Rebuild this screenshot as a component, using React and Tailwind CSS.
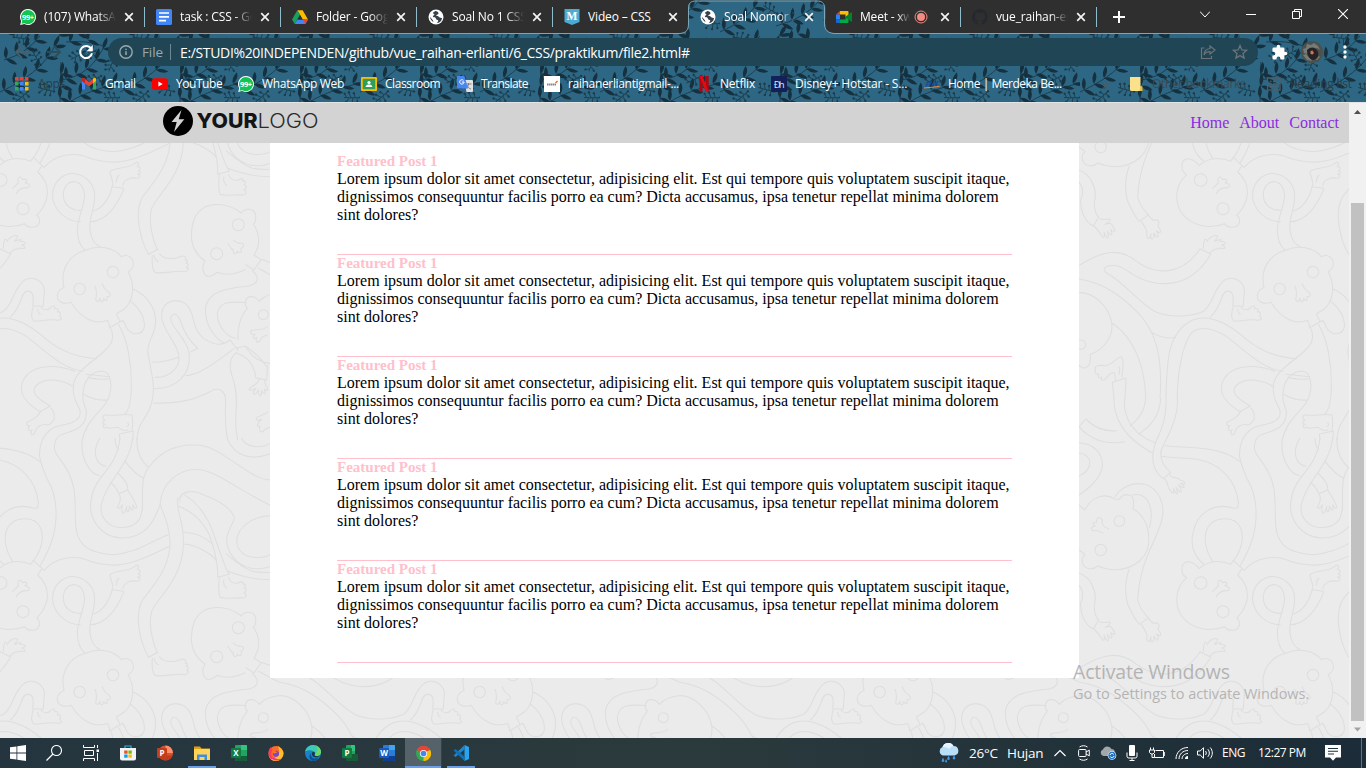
import React from "react";

const CHROME_FONT = "font-['Open_Sans','Noto_Sans',sans-serif]";

/* ---------- Doodle wallpaper ---------- */

const doodleA =
  "M510,9 C505,70 475,110 440,155 C415,180 412,220 417,255 C422,290 435,325 446,343 L475,327 M472,331 C455,290 445,240 455,205 C475,160 545,110 550,9 M457,345 C455,370 458,390 465,398 C490,402 530,390 555,395 C568,392 566,385 560,382 C568,378 565,370 558,370 C566,365 562,358 555,360 C562,350 550,345 540,350 C520,358 490,360 478,340 M463,345 C462,355 470,362 476,365 " +
  "M370,145 L336,140 C345,130 330,110 330,95 C345,80 380,88 405,70 C415,62 420,72 412,80 C425,80 422,90 414,92 C425,95 420,103 412,102 C425,105 420,115 410,115 C390,110 370,120 368,140 M358,105 C345,110 355,120 347,128 " +
  "M336,142 C330,170 310,205 280,213 M372,145 C355,190 320,245 272,245 M242,245 C190,245 155,200 158,160 C162,120 195,97 225,101 C265,107 285,140 284,170 C283,210 265,240 270,270 C273,295 285,315 302,321 M245,211 C215,213 190,195 190,165 C190,140 205,124 225,125 C245,128 256,150 253,175 C248,210 232,240 232,270 C233,300 240,320 256,331 " +
  "M349,523 L360,544 M330,562 L323,541 C290,555 245,540 213,487 C190,495 170,485 172,465 C175,450 182,445 192,443 C180,390 205,345 256,331 C300,312 345,325 364,350 C385,340 402,355 400,375 C398,385 390,392 384,395 C405,430 402,480 375,505 C365,515 355,515 349,523 " +
  "M284,438 C292,450 290,465 287,480 C292,488 298,482 300,475 C300,490 310,488 312,475 C315,488 325,482 320,470 C335,472 332,460 325,455 C315,450 310,440 306,430 M327,565 L368,541 L376,553 " +
  "M400,447 C440,465 475,510 465,560 C460,590 440,610 444,640 C450,680 462,720 460,750 C458,790 450,810 430,840 C415,860 412,880 411,900 M388,481 C415,500 435,530 433,560 C430,585 400,585 390,575 C380,570 378,560 372,546 M355,553 C385,600 395,680 394,740 C393,790 385,815 373,822 M333,565 C345,600 335,615 300,645 C255,680 220,705 220,740 C215,790 250,800 238,830 C220,860 170,850 150,870 C135,885 130,890 127,900 M168,900 C180,870 235,885 255,840 C270,800 240,800 250,750 C255,715 280,690 310,694 C335,700 335,740 330,760 C320,810 260,830 247,900 M257,703 L328,710 M262,712 C280,718 310,718 328,716 " +
  "M220,740 C190,720 140,710 110,735 C90,755 110,775 151,798 L120,815 C80,790 50,760 70,720 C95,675 160,670 225,694 M122,812 C120,825 100,840 85,845 C75,850 82,860 90,857 C80,868 88,876 96,870 C90,882 96,890 104,880 C108,860 125,850 145,855 C165,845 170,825 152,803 M250,762 C270,775 295,782 322,780 " +
  "M396,872 C398,860 398,840 396,825 C370,820 340,830 315,824 C305,828 308,838 315,840 C305,845 308,852 315,853 C305,856 310,866 320,862 C330,870 345,860 355,862 C360,870 375,872 385,870 M382,848 C388,852 386,857 380,860 M358,882 L400,873 L398,900 M358,882 L360,900 " +
  "M724,219 C680,185 610,180 583,235 C565,290 575,335 615,363 C600,390 615,412 630,409 C640,407 645,403 650,397 C690,410 715,398 736,389 M724,219 C735,203 762,203 767,225 C768,240 765,250 760,252 C785,290 778,320 762,345 L782,358 M683,310 C695,320 690,330 700,328 C697,340 708,348 712,333 C720,345 728,335 722,325 C735,322 732,308 722,310 C710,312 700,300 699,300 M736,373 L762,390 L784,358 L837,377 M775,385 C795,395 815,408 837,417 M756,392 C780,410 775,430 750,437 C700,445 630,445 617,500 C612,550 640,590 672,610 M740,488 C700,485 660,480 652,520 C652,560 680,590 707,595 " +
  "M837,458 C810,460 790,470 778,484 C765,465 740,465 736,485 C733,495 738,500 742,505 C720,530 710,570 715,600 M735,618 C755,650 780,672 832,672 M803,558 C790,575 765,565 752,573 C750,582 758,585 765,583 C755,592 762,600 770,592 C765,605 772,612 780,602 C783,592 790,588 803,585 " +
  "M463,712 C510,715 545,680 535,640 C525,600 480,560 485,520 C490,480 530,475 555,490 C590,520 570,560 610,595 C650,620 670,615 690,600 M460,745 C530,750 575,700 567,640 C565,600 510,560 512,535 C515,520 530,515 540,540 C550,570 570,605 593,625 L570,637 M535,652 C510,662 480,667 455,667 M556,707 C600,705 650,665 703,625 M460,790 C540,790 580,780 630,755 C655,740 675,750 677,780 C675,820 675,860 683,900 M690,600 L715,632 M707,625 L736,618 M710,640 C745,650 765,680 767,713 L800,720 L803,676 M735,618 C755,630 785,655 800,680 M712,635 C680,660 690,690 700,720 C720,780 700,830 710,880 L713,900 " +
  "M778,716 C775,735 755,735 747,748 C752,755 762,748 768,745 C755,758 760,768 768,760 C772,755 775,752 776,750 C775,770 785,775 785,752 C790,765 798,765 793,748 C805,755 806,748 797,735 L793,720 M805,815 C790,828 775,825 768,835 C770,845 780,840 785,838 C770,850 768,862 780,858 C775,875 785,882 795,868 L810,862";

const doodleB =
  "M553,170 C600,200 630,250 645,300 C660,340 670,380 688,410 M535,205 C580,220 620,260 635,310 C650,360 655,390 653,418 L690,408 M658,418 C655,445 655,465 660,478 C680,484 715,478 730,480 C742,476 740,468 732,465 C742,460 740,450 732,450 C740,442 735,436 728,438 C732,430 722,430 715,435 C700,438 690,430 685,418 M672,425 C667,440 675,445 680,452 " +
  "M837,235 C760,225 710,270 710,310 C712,355 760,365 800,355 C815,350 825,345 837,335 M540,190 C535,165 570,150 610,170 C650,185 695,210 703,240 C700,260 680,275 680,310 C685,360 730,397 780,392 C800,390 815,385 837,375 M548,283 C590,285 610,295 640,320 M550,318 C590,320 640,350 650,370 M678,347 C700,365 720,385 757,400 C785,405 810,402 837,406 M685,400 C720,415 760,425 812,425 L837,442 " +
  "M410,0 C412,50 425,70 445,88 M427,220 C430,180 420,120 445,90 C480,40 530,15 600,22 C670,32 740,115 800,125 L837,125 M425,215 C425,250 400,270 360,269 C310,265 295,220 307,190 C320,130 390,80 398,0 M480,200 C460,260 430,300 365,300 C300,298 265,240 273,190 C280,110 350,100 360,0 M480,200 C485,130 540,90 600,95 C650,100 720,160 837,215 M480,200 C500,245 512,290 510,324 M534,178 C525,220 555,250 550,324 " +
  "M127,6 C110,50 120,70 140,120 C165,160 170,200 168,240 C165,300 145,340 120,385 M168,6 C155,35 170,50 185,70 C230,130 225,180 226,240 C225,310 250,345 340,350 C410,345 440,315 505,290 M132,397 C170,355 230,350 270,370 C350,395 400,380 508,325 " +
  "M247,6 C240,60 270,110 300,113 M300,0 C275,40 285,80 320,85 M345,0 C345,20 350,30 357,35 M375,70 C390,90 410,110 430,120 M353,105 C370,120 385,140 383,155 L357,167 C350,150 340,140 332,133 M357,167 C365,180 360,195 352,208 C358,215 365,205 368,200 C362,215 368,230 372,225 C378,215 380,210 380,205 C378,225 388,228 388,205 C395,220 402,222 398,200 C405,215 415,212 408,200 C400,180 390,170 383,155 M683,6 C700,40 740,85 837,35 M725,0 C735,30 790,35 820,10";

const doodleC =
  "M482,190 C450,175 410,180 388,203 C370,180 345,175 337,195 C333,215 340,225 350,230 C315,260 312,310 335,345 C365,385 420,395 463,377 C475,392 500,392 508,375 C512,360 505,355 500,352 C540,310 545,260 503,222 L515,204 M482,190 L490,178 L523,209 M427,272 L445,255 C440,235 455,232 457,245 C470,240 475,250 465,254 C480,255 482,270 470,269 C455,268 445,275 438,288 " +
  "M27,503 C100,455 150,450 200,490 C260,535 340,530 390,452 L422,468 C370,560 290,570 220,545 C180,530 170,510 140,503 C105,500 90,515 115,528 C170,560 220,630 265,645 C310,660 370,655 400,640 C430,620 430,570 465,545 C500,530 530,560 522,590 L520,625 L488,623 L490,600 C487,575 465,570 455,600 C445,630 435,645 420,658 M400,452 C400,430 405,415 412,430 C420,415 440,408 443,415 C445,420 430,430 435,430 C455,420 455,425 450,430 C470,430 470,440 455,440 C470,448 468,455 450,450 C440,455 430,450 420,465 M490,625 C482,650 485,665 492,670 C520,668 545,662 565,667 C578,665 576,658 568,655 C575,645 570,640 562,642 C568,632 560,630 553,632 C558,622 548,622 542,628 C535,638 520,638 513,627 M503,633 C502,645 508,645 512,650 " +
  "M288,900 C290,800 290,700 370,665 C430,645 490,690 530,725 C580,765 630,780 682,782 M322,900 C322,830 335,750 360,710 C385,680 440,685 500,740 C550,780 590,815 640,820 M27,543 C100,555 150,590 200,640 C250,690 280,760 270,900 M245,703 C270,720 300,722 318,718 M27,584 C70,582 120,625 126,680 C128,720 100,755 60,770 C65,795 55,810 40,810 C32,808 27,803 22,798 M127,675 C190,720 225,800 227,900 M168,840 L127,853 L132,900 M168,842 L165,900 M155,838 C160,810 160,785 155,777 C140,775 130,800 105,803 C85,800 70,805 77,815 C72,825 80,830 86,828 C82,840 90,842 95,838 C92,850 102,848 108,842 C115,832 125,820 133,825 C137,838 135,845 137,850 M145,805 C155,812 145,820 148,830";

const doodleD =
  "M402,523 C370,500 360,460 370,425 C380,370 430,340 480,352 C500,358 506,355 505,340 C500,270 450,220 380,208 C350,203 310,205 274,199 M428,514 C405,480 400,440 412,415 C430,380 490,375 510,410 C525,440 515,480 490,513 " +
  "M27,110 L47,87 C75,115 110,125 140,122 M205,133 C240,110 270,80 272,24 M27,110 C60,150 110,165 165,155 M180,108 C210,85 225,60 227,24 M132,24 C130,60 145,110 190,150 C220,175 240,185 248,190 M165,24 C160,50 165,90 200,125 C230,150 245,155 255,158 M288,24 C290,60 285,100 260,150 C240,200 245,240 280,266 L302,247 C270,220 265,190 283,160 C310,110 325,60 322,24 M283,265 C295,275 292,295 300,300 C310,315 312,310 310,295 C320,318 328,318 318,292 C335,315 340,308 325,285 C345,300 348,290 332,280 C350,285 348,275 330,270 C325,262 305,265 300,255 M285,167 C350,175 450,165 510,215 M27,158 C70,160 100,190 97,230 C90,270 50,300 27,315 M27,190 C65,190 75,235 27,258 " +
  "M135,327 C100,305 60,325 45,360 L27,345 M135,327 L148,328 C160,308 188,310 190,330 C192,345 190,350 188,355 C230,380 245,430 232,480 C210,530 150,555 83,528 C70,540 45,540 38,520 C35,510 38,500 45,493 L27,480 M117,417 C100,410 95,405 97,390 C88,375 78,385 80,397 C65,395 68,405 75,408 C60,412 62,422 72,422 C85,420 90,425 100,430 M135,320 C155,290 190,275 225,283 C265,295 285,340 277,380 C270,440 210,500 203,630 C210,660 225,672 236,685 M188,315 C230,305 255,350 238,415 M178,537 C165,570 165,610 172,640 C185,670 195,690 208,703 L236,683 M214,703 C220,715 235,730 230,745 C232,760 240,757 243,740 C240,762 252,762 252,738 C260,758 270,752 260,732 C275,745 275,730 264,718 C270,705 265,695 255,700 C245,700 240,690 236,685 " +
  "M27,550 C60,560 80,600 75,635 C70,655 75,680 86,690 L70,717 C45,705 30,670 32,640 C45,610 35,595 27,586 M72,717 C85,730 95,745 98,750 C104,752 104,745 102,735 C112,760 120,758 112,733 C125,750 130,745 122,728 C138,738 138,730 128,718 C125,708 118,708 105,712 C120,705 125,698 118,696 C110,696 100,700 88,695";

function Doodles() {
  const copies = [];
  for (const i of [0, 1, 2, 3]) for (const j of [-1, 0, 1]) copies.push([i * 1200, j * 1209]);
  return (
    <svg className="absolute inset-0 h-full w-full" viewBox="0 0 4047 1785" preserveAspectRatio="none">
      <defs>
        <g id="doodle" fill="none" stroke="#dedede" strokeWidth="3.2" strokeLinejoin="round">
          <path d={doodleA} />
          <path d={doodleB} transform="translate(0 894)" />
          <path d={doodleC} transform="translate(-390 -126)" />
          <path d={doodleD} transform="translate(-390 750)" />
          <circle cx="339" cy="396" r="17" />
          <circle cx="239" cy="447" r="17" />
          <circle cx="715" cy="254" r="18" />
          <circle cx="650" cy="341" r="18" />
          <circle cx="790" cy="524" r="15" />
          <circle cx="843" cy="614" r="14" />
          <circle cx="2" cy="120" r="19" />
          <circle cx="69" cy="206" r="18" />
          <circle cx="-242" cy="1143" r="16" />
          <circle cx="-298" cy="1230" r="17" />
        </g>
      </defs>
      <g transform="translate(0 -9)">
        {copies.map(([x, y]) => (
          <use key={`${x}:${y}`} href="#doodle" x={x} y={y} />
        ))}
      </g>
    </svg>
  );
}

/* ---------- Leafy browser theme ---------- */

const stems = [
  { p: [[4, 90], [14, 84], [24, 78], [36, 70], [46, 58], [54, 47], [60, 36]], d: "M0,92 Q26,80 40,66 T60,34" },
  { p: [[60, 98], [61, 86], [61, 74]], d: "M60,102 L61,62" },
  { p: [[66, 79], [76, 74], [86, 69], [96, 60], [103, 49]], d: "M61,80 Q92,76 106,42" },
  { p: [[70, 101], [80, 95], [91, 90], [102, 87], [113, 84]], d: "M66,104 Q84,92 116,84" },
  { p: [[6, 59], [16, 54], [26, 48], [35, 41]], d: "M4,60 Q26,54 40,36" },
  { p: [[4, 30], [14, 25], [24, 19], [34, 8]], d: "M0,32 Q28,20 38,2" },
  { p: [[62, 24], [72, 20], [82, 15], [91, 9], [98, 3]], d: "M56,26 Q86,18 100,0" },
  { p: [[88, 40], [78, 34], [70, 42]], d: "M104,46 Q86,40 66,42" },
];
const sprigs = [[22, 97, -30], [46, 90, 25], [90, 53, 160], [22, 38, 200], [78, 56, -20], [112, 98, 10], [112, 64, -60], [50, 10, 40], [112, 24, 10], [36, 58, 70], [94, 80, -15]];

function LeafTheme() {
  return (
    <svg className="absolute inset-0 h-full w-full" aria-hidden="true">
      <defs>
        <pattern id="leaves" width="120" height="104" patternUnits="userSpaceOnUse">
          <rect width="120" height="104" fill="#2d6784" />
          <g fill="#15303e" stroke="none">
            {stems.map((s, i) => (
              <g key={i}>
                <path d={s.d} fill="none" stroke="#17394a" strokeWidth="0.9" />
                {s.p.map(([x, y], k) => (
                  <g key={k} transform={`translate(${x} ${y})`}>
                    <path d="M0,0 Q0,-6 8,-9.500 Q8,-3 0,0" transform={`rotate(${-42 + k * 5})`} />
                    <path d="M0,0 Q1,-6 9,-8.500 Q8,-2 0,0" transform={`rotate(${68 - k * 6})`} />
                  </g>
                ))}
              </g>
            ))}
            {sprigs.map(([x, y, r], i) => (
              <g key={i} transform={`translate(${x} ${y}) rotate(${r})`} opacity="0.8">
                <path d="M-8,1 Q0,0 8,-2 M-5,1 L-8,-3 M-1,0 L-4,-5 M3,-1 L1,-5 M-3,1 L-5,5 M1,0 L1,5 M5,-1 L6,3" fill="none" stroke="#163644" strokeWidth="1" />
                <circle cx="-8" cy="-3" r="1.2" /><circle cx="-4" cy="-5" r="1.3" /><circle cx="1" cy="-5" r="1.2" />
                <circle cx="-5" cy="5" r="1.2" /><circle cx="1" cy="5" r="1.2" /><circle cx="6" cy="3" r="1.2" /><circle cx="8" cy="-2" r="1.2" />
              </g>
            ))}
          </g>
        </pattern>
      </defs>
      <rect width="100%" height="100%" fill="url(#leaves)" />
      <path d="M0,0 H1366 V33 H834 C828,33 825.500,30 825.500,24 V8 C825.500,3 822,0.500 817,0.500 H696 C691,0.500 688.500,3 688.500,8 V24 C688.500,30 686,33 680,33 H0 Z" fill="#2f2f2f" />
      <path d="M1366,33.500 H834 C828,33 824.500,30 824.500,24 V8 C824.500,3 822,1 817,1 H696 C691,1 688.500,3 688.500,8 V24 C688.500,30 686,33 680,33.500 H0" fill="none" stroke="#7ba6b8" />
    </svg>
  );
}

/* ---------- Favicons ---------- */

const S = ({ children, box = "0 0 16 16", className = "h-4 w-4" }) => (
  <svg viewBox={box} className={`shrink-0 ${className}`}>{children}</svg>
);

const WhatsApp = () => (
  <S>
    <path d="M8 0a8 8 0 1 1-3.700 15.100L.2 16l1-3.900A8 8 0 0 1 8 0z" fill="#fff" />
    <path d="M8 .9a7.100 7.100 0 1 1-3.500 13.300L1.500 14.800l.7-2.900A7.100 7.100 0 0 1 8 .9z" fill="#12c552" />
    <text x="8.100" y="10.700" fontSize="7.500" fontWeight="700" textAnchor="middle" fill="#fff" fontFamily="Open Sans" textLength="12">99+</text>
  </S>
);
const Docs = () => (
  <S>
    <rect width="16" height="16" rx="1.500" fill="#4285f4" />
    <path d="M3 4h10M3 7.800h10M3 11.600h7" stroke="#fff" strokeWidth="1.700" />
  </S>
);
const Drive = () => (
  <S>
    <path d="M5.300 1.300h5.400L16 10.500h-5.300z" fill="#fbbc04" />
    <path d="M5.300 1.300 8 6 2.700 15 0 10.500z" fill="#18a15e" />
    <path d="M5.400 10.500H16L13.300 15H2.700z" fill="#4285f4" />
    <path d="M10.700 10.500H16L13.300 15z" fill="#ea4335" />
    <path d="M5.500 10.400 8 6l2.600 4.400z" fill="#2f2f2f" />
  </S>
);
const Globe = () => (
  <S>
    <circle cx="8" cy="8" r="7.500" fill="#fff" />
    <path d="M7.300 1.900c-.8 1-2 .8-2.300 1.900-.2 1 1.300.8 1.400 1.800 0 1-1.600.8-1.500 2 .1.800 1.500.6 2.300 1 1 .4.300 1.500 1.200 2 .9.300 1.900.3 1.800 1.400-.1.900-1 1.400-1.500 2.200 2.700-.3 5-2.200 5.400-5-.8-.5-2-.3-2.700-1-.6-.8-1.500-1.400-2.500-1.300-.8 0-.8-1 0-1.100 1-.1 1.600-.6 1.600-1.500 0-1.100-1.400-2.300-3.200-2.400zM1.900 8c.3 2 1.600 3.900 3.400 4.900.1-1-.5-1.700-1.100-2.400C3.400 9.700 2.900 8.600 1.900 8z" fill="#39424a" />
  </S>
);
const MBadge = () => (
  <S>
    <path d="M.5 0h15v13L8 16 .5 13z" fill="#4bacd3" />
    <text x="8" y="11" fontSize="11.500" fontWeight="700" textAnchor="middle" fill="#fff" fontFamily="Liberation Serif">M</text>
  </S>
);
const Meet = () => (
  <S>
    <path d="M4 2v3.500H0z" fill="#ea4335" />
    <path d="M4 2h7.500c.8 0 1 .4 1 1v3L9.500 8V5.400H4z" fill="#fbbc04" />
    <path d="M0 5.500h4v5H0z" fill="#2684fc" />
    <path d="M0 10.500h4V14H1.200C.4 14 0 13.600 0 13z" fill="#1967d2" />
    <path d="M4 10.600h5.500V8l3 2v3c0 .7-.3 1-1 1H4z" fill="#00ac47" />
    <path d="M9.500 8 15 3.500c.6-.4 1-.1 1 .5v8c0 .6-.5.9-1 .5z" fill="#00832d" />
  </S>
);
const Github = () => (
  <S>
    <path d="M8 0a8 8 0 0 0-2.500 15.600c.4.100.5-.2.500-.4v-1.500c-2.200.5-2.700-1-2.700-1-.4-.9-.9-1.200-.9-1.200-.7-.5.1-.5.100-.5.8.100 1.200.8 1.200.8.7 1.300 1.900.9 2.300.7.100-.5.300-.9.500-1.100-1.800-.2-3.600-.9-3.600-4 0-.9.300-1.600.8-2.200-.1-.2-.4-1 .1-2.100 0 0 .7-.2 2.200.8a7.500 7.500 0 0 1 4 0c1.500-1 2.200-.8 2.200-.8.4 1.100.2 1.900.1 2.100.5.600.8 1.300.8 2.200 0 3.100-1.900 3.700-3.700 3.900.3.300.6.800.6 1.500v2.200c0 .2.100.5.600.4A8 8 0 0 0 8 0z" fill="#24292f" />
  </S>
);
const Close = () => (
  <S box="0 0 10 10" className="h-[10px] w-[10px]">
    <path d="M1.200 1.200 8.800 8.800M8.800 1.200 1.200 8.800" stroke="#f3f3f3" strokeWidth="1.700" />
  </S>
);

const tabs = [
  { t: "(107) WhatsApp", icon: <WhatsApp />, bar: true },
  { t: "task : CSS - Goo", icon: <Docs />, bar: true },
  { t: "Folder - Google", icon: <Drive />, bar: true },
  { t: "Soal No 1 CSS -", icon: <Globe />, bar: true },
  { t: "Video – CSS", icon: <MBadge />, whole: true },
  { t: "Soal Nomor 2 C", icon: <Globe /> },
  { t: "Meet - xwd", icon: <Meet />, rec: true, bar: true },
  { t: "vue_raihan-erli", icon: <Github />, bar: true },
];

function TabStrip() {
  return (
    <div className="relative flex h-[34px] items-center pl-2">
      {tabs.map((tab, i) => (
        <div key={i} className="relative flex h-[34px] w-[136px] shrink-0 items-center pl-3">
          {tab.icon}
          <span
            className={`ml-2 overflow-hidden whitespace-nowrap text-xs text-white ${tab.rec ? "w-[50px] tracking-[-0.2px]" : "w-[72px] tracking-[-0.15px]"} ${tab.whole ? "" : "[mask-image:linear-gradient(to_right,#000_75%,transparent)]"}`}
          >
            {tab.t}
          </span>
          {tab.rec && (
            <S box="0 0 14 14" className="ml-1 mr-1 h-[14px] w-[14px]">
              <circle cx="7" cy="7" r="6" fill="none" stroke="#f28b82" />
              <circle cx="7" cy="7" r="4" fill="#f28b82" />
            </S>
          )}
          <span className="ml-2 flex"><Close /></span>
          {tab.bar && <i className="absolute -right-px top-[7px] h-5 w-px bg-[#8fbccd]" />}
        </div>
      ))}
      <svg viewBox="0 0 12 12" className="ml-[17px] h-3 w-3"><path d="M6 0v12M0 6h12" stroke="#fff" strokeWidth="2" /></svg>
      <div className="ml-auto mr-[18px] flex h-full items-start gap-9 pt-[9px]">
        <svg viewBox="0 0 10 10" className="h-[10px] w-[10px]"><path d="M0 2.500 5 8l5-5.500" fill="none" stroke="#fff" /></svg>
        <svg viewBox="0 0 10 10" className="h-[10px] w-[10px]"><path d="M0 5.500h10" stroke="#fff" /></svg>
        <svg viewBox="0 0 10 10" className="h-[10px] w-[10px]"><path d="M.5 2.500h7v7h-7zM2.500 2.500v-2h7v7h-2" fill="none" stroke="#fff" /></svg>
        <svg viewBox="0 0 10 10" className="h-[10px] w-[10px]"><path d="M0 0l10 10M10 0 0 10" stroke="#fff" strokeWidth="1.100" /></svg>
      </div>
    </div>
  );
}

function Toolbar() {
  return (
    <div className="relative flex h-9 items-center">
      <div className="flex w-[108px] items-center pl-[14px]">
        <svg viewBox="0 0 16 16" className="h-4 w-4"><path d="M15 8H2M8 2 2 8l6 6" fill="none" stroke="#45606c" strokeWidth="1.800" /></svg>
        <svg viewBox="0 0 16 16" className="ml-4 h-4 w-4"><path d="M1 8h13M8 2l6 6-6 6" fill="none" stroke="#2c4e5c" strokeWidth="1.800" /></svg>
        <svg viewBox="0 0 16 16" className="ml-4 h-4 w-4"><path d="M13.300 5A6 6 0 1 0 14 9.300" fill="none" stroke="#fff" strokeWidth="2" /><path d="M14.800 1v6.200H8.600z" fill="#fff" /></svg>
      </div>
      <div className="flex h-7 w-[1150px] items-center rounded-full bg-[#204555] pl-[11px] pr-[10px]">
        <svg viewBox="0 0 14 14" className="h-[14px] w-[14px]"><circle cx="7" cy="7" r="6.200" fill="none" stroke="#9aa9b1" strokeWidth="1.400" /><path d="M7 6.200V10M7 3.700v1.400" stroke="#9aa9b1" strokeWidth="1.500" /></svg>
        <span className="ml-[9px] w-[28px] text-[13.500px] tracking-[-0.1px] text-[#9aa9b1]">File</span>
        <i className="h-4 w-px bg-[#6f8893]" />
        <span className="ml-[9px] whitespace-nowrap text-[14px] tracking-[-0.35px] text-white">E:/STUDI%20INDEPENDEN/github/vue_raihan-erlianti/6_CSS/praktikum/file2.html#</span>
        <svg viewBox="0 0 16 16" className="ml-auto h-4 w-4"><path d="M4.500 4H1.500v10.500h10V12M10 2l5 4-5 4V7.700C7 7.700 5 8.800 4 11c.2-4 2.500-6.200 6-6.500z" fill="none" stroke="#6b7478" strokeWidth="1.200" /></svg>
        <svg viewBox="0 0 16 16" className="ml-4 h-4 w-4"><path d="m8 1.500 1.800 4.400 4.800.4-3.600 3.100 1.100 4.700L8 11.600l-4.100 2.500L5 9.400 1.400 6.300l4.800-.4z" fill="none" stroke="#6b7478" strokeWidth="1.300" /></svg>
      </div>
      <svg viewBox="0 0 24 24" className="ml-[13px] h-[17px] w-[17px]"><path d="M20.500 11H19V7a2 2 0 0 0-2-2h-4V3.500a2.500 2.500 0 0 0-5 0V5H4a2 2 0 0 0-2 2v3.800h1.500a2.700 2.700 0 0 1 0 5.400H2V20a2 2 0 0 0 2 2h3.800v-1.500a2.700 2.700 0 0 1 5.400 0V22H17a2 2 0 0 0 2-2v-4h1.500a2.500 2.500 0 0 0 0-5z" fill="#fff" /></svg>
      <svg viewBox="0 0 22 22" className="ml-[13px] h-[22px] w-[22px]">
        <circle cx="11" cy="11" r="11" fill="#4c514e" />
        <path d="M2 8l3-1 1-4 4 1 3-2 4 3 2 4-3-2-4 1-4 2-2 3-3-1zM2 14l3-1 4 4 2 3-5-1zM14 18l4-3 1 1-3 3z" fill="#777b76" />
        <path d="M6 9c4-4 9-3 11 2 1 4-1 8-5 8-4-1-6-5-6-10z" fill="#242425" />
        <path d="M9.500 10l2-.5 1.500 2.500-1.500 1.500-2-.5z" fill="#d5705c" />
      </svg>
      <svg viewBox="0 0 4 16" className="ml-5 h-4 w-1"><circle cx="2" cy="3" r="1.700" fill="#fff" /><circle cx="2" cy="8" r="1.700" fill="#fff" /><circle cx="2" cy="13" r="1.700" fill="#fff" /></svg>
    </div>
  );
}

const appDots = ["#ea4335", "#ea4335", "#ea4335", "#34a853", "#4285f4", "#fbbc04", "#34a853", "#4285f4", "#fbbc04"];

const bookmarks = [
  {
    w: "w-[67px]", t: "Apps", dim: true, tr: "tracking-[-0.2px]",
    icon: <S>{appDots.map((c, i) => <rect key={i} x={1 + (i % 3) * 5} y={1 + Math.floor(i / 3) * 5} width="3.500" height="3.500" fill={c} />)}</S>,
  },
  {
    w: "w-[71px]", t: "Gmail", tr: "tracking-[-0.4px]",
    icon: <S><path d="M1 3v10.500h3V7z" fill="#4285f4" /><path d="M12 7v6.500h3V3z" fill="#34a853" /><path d="M1 3.500C1 2 2.500 1.800 3.500 2.500L8 6l4.500-3.500C13.500 1.800 15 2 15 3.500L14 5.700 8 10.300 2 5.700z" fill="#ea4335" /><path d="M12 3l.5-.5C13.500 1.800 15 2 15 3.500V5l-3 2.300z" fill="#fbbc04" /><path d="M1 3.500C1 2.500 2 2 3 2.300l1 .7v4.300L1 5z" fill="#c5221f" /></S>,
  },
  {
    w: "w-[86px]", t: "YouTube", tr: "tracking-[-0.45px]",
    icon: <S><rect x="0" y="2.300" width="16" height="11.400" rx="2.600" fill="#f00" /><path d="M6.400 5.500v5L10.700 8z" fill="#fff" /></S>,
  },
  { w: "w-[123px]", t: "WhatsApp Web", tr: "tracking-[-0.3px]", icon: <WhatsApp /> },
  {
    w: "w-[96px]", t: "Classroom", tr: "tracking-[-0.45px]",
    icon: <S><rect y="1" width="16" height="14" rx="1" fill="#fbbc04" /><rect x="1.800" y="2.800" width="12.400" height="10.400" fill="#2f9e58" /><circle cx="8" cy="6.500" r="1.600" fill="#fff" /><path d="M4.600 11c.3-2 2-2.500 3.400-2.500s3.100.5 3.400 2.500z" fill="#fff" /></S>,
  },
  {
    w: "w-[87px]", t: "Translate", tr: "tracking-[-0.55px]",
    icon: <S><path d="M7 4h8a1 1 0 0 1 1 1v10a1 1 0 0 1-1 1H9.500z" fill="#dfe1e4" /><path d="M8.500 8h6M11.500 7v1c0 2-1.500 4-3 4.500M10 9c.5 2 2 3.500 4 4" fill="none" stroke="#6f7780" strokeWidth=".9" /><path d="M1 0h6.500L11 12.500H1a1 1 0 0 1-1-1V1a1 1 0 0 1 1-1z" fill="#4a86f0" /><path d="M7.100 6H4.900M7.100 6a2.200 2.200 0 1 1-.7-1.700" fill="none" stroke="#fff" /></S>,
  },
  {
    w: "w-[152px]", t: "raihanerliantigmail-...", tr: "tracking-[-0.34px]",
    icon: <S><rect width="16" height="16" fill="#fff" /><path d="M3 8.500h9" stroke="#8e8585" strokeWidth="1.800" strokeDasharray="1.500 .4" /><path d="M11.500 7 13.500 5" stroke="#f26b21" strokeWidth="1.500" /></S>,
  },
  {
    w: "w-[75px]", t: "Netflix", tr: "tracking-[-0.2px]",
    icon: <S><path d="M3.500 0h3v16l-3-.3zM9.700 0h3v16l-3-.4z" fill="#b1060f" /><path d="M3.500 0h3l6.200 16-3-.3z" fill="#e50914" /></S>,
  },
  {
    w: "w-[153px]", t: "Disney+ Hotstar - S...", tr: "tracking-[-0.15px]",
    icon: <S><rect width="16" height="16" rx="1" fill="#14205a" /><text x="8.200" y="11.500" fontSize="9.500" textAnchor="middle" fill="#dfe6ff" fontFamily="Open Sans" textLength="11">Ðh</text></S>,
  },
  {
    w: "w-[178px]", t: "Home | Merdeka Be...", tr: "tracking-[-0.48px]",
    icon: <S><path d="M2 10.500l2.500-5M5 10l2.500-5M8 10l2.500-5M11 9.500l3-4.500" stroke="#1d4c9d" strokeWidth="1.600" /><path d="M0 11.500 15.500 10v1L0 12.500z" fill="#f08a3c" /></S>,
  },
];

function Bookmarks() {
  return (
    <div className="relative flex h-7 items-center pl-[14px] text-xs text-white">
      {bookmarks.map((b) => (
        <span key={b.t} className={`flex shrink-0 items-center gap-2 ${b.w}`}>
          {b.icon}
          <span className={`whitespace-nowrap ${b.tr} ${b.dim ? "text-[#263f4b]" : ""}`}>{b.t}</span>
        </span>
      ))}
      <span className="w-[26px] shrink-0 text-base leading-none text-[#4a5d66]">»</span>
      <span className="flex w-[138px] shrink-0 items-center gap-2">
        <S><path d="M2 1h10.500v9.500h1.500V15H3.500A1.500 1.500 0 0 1 2 13.500z" fill="#fbe28a" /><path d="M12.500 10.500h2V15h-3z" fill="#e8bd42" /></S>
        <span className="whitespace-nowrap tracking-[-0.35px] text-[#3d4a51]">Other bookmarks</span>
      </span>
      <span className="flex shrink-0 items-center gap-2">
        <S><rect x="1.500" y="2" width="12.500" height="12" fill="none" stroke="#4f5f67" strokeWidth="1.300" /><path d="M4 5.500h1.500M7 5.500h5M4 8h1.500M7 8h5M4 10.500h1.500M7 10.500h5" stroke="#4f5f67" strokeWidth="1.300" /></S>
        <span className="whitespace-nowrap tracking-[-0.2px] text-[#2c3d46]">Reading list</span>
      </span>
    </div>
  );
}

/* ---------- Page ---------- */

function Logo() {
  return (
    <svg viewBox="0 0 158 32" className="ml-[162px] h-8 w-[158px]">
      <circle cx="16" cy="16" r="15" fill="#000" />
      <path d="M19.500 5 9.500 17h5.200L12 27 22.300 14.300h-5.600z" fill="#d3d3d3" />
      <text x="34.500" y="23" fontFamily="Inter" fontSize="20.500" fontWeight="800" fill="#151515" textLength="61" lengthAdjust="spacingAndGlyphs">YOUR</text>
      <text x="95.500" y="23" fontFamily="Inter" fontSize="20.500" fontWeight="300" fill="#2a2a2a" textLength="61" lengthAdjust="spacingAndGlyphs">LOGO</text>
    </svg>
  );
}

function Post() {
  return (
    <article className="h-[102px] border-b border-[#ffc0cb] leading-[18px]">
      <h2 className="text-[15px] font-bold text-[#ffc0cb]">Featured Post 1</h2>
      <p className="whitespace-nowrap text-base leading-[18px] text-black">
        Lorem ipsum dolor sit amet consectetur, adipisicing elit. Est qui tempore quis voluptatem suscipit itaque,<br />
        dignissimos consequuntur facilis porro ea cum? Dicta accusamus, ipsa tenetur repellat minima dolorem<br />
        sint dolores?
      </p>
    </article>
  );
}

function Page() {
  return (
    <div className="relative flex h-[636px] border-t border-[#e4e4e4]">
      <div className="flex w-[1349px] flex-col bg-[#ebebeb] font-['Liberation_Serif',serif]">
        <nav className="flex h-10 shrink-0 items-center bg-[#d3d3d3] pr-[10px]">
          <div className="mb-[5px] flex"><Logo /></div>
          <div className="ml-auto flex gap-[10px] text-base text-[#8a2be2]">
            <a>Home</a>
            <a>About</a>
            <a>Contact</a>
          </div>
        </nav>
        <div className="relative flex-1 overflow-hidden">
          <Doodles />
          <main className="relative ml-[270px] h-[535px] w-[809px] bg-white pl-[67px] pr-[67px] pt-[9px]">
            {[1, 2, 3, 4, 5].map((n) => (
              <div key={n} className={n === 1 ? "[&>article]:h-[103px]" : "-mt-px [&>article]:h-[103px]"}><Post /></div>
            ))}
          </main>
        </div>
      </div>
      <div className="flex w-[17px] flex-col items-center bg-[#f1f1f1]">
        <svg viewBox="0 0 17 17" className="h-[17px] w-[17px]"><path d="M5 11h7L8.500 7z" fill="#505050" /></svg>
        <div className="mt-[83px] h-[518px] w-[13px] bg-[#c1c1c1]" />
        <svg viewBox="0 0 17 17" className="h-[17px] w-[17px]"><path d="M5 6.500h7l-3.500 4z" fill="#a3a3a3" /></svg>
      </div>
      <div className={`absolute left-[1073px] top-[556px] whitespace-nowrap text-[#a9a9a9]/85 ${CHROME_FONT}`}>
        <div className="text-[19.500px] leading-[25px] tracking-[-0.2px]">Activate Windows</div>
        <div className="text-[14.500px] leading-5 tracking-[-0.04px]">Go to Settings to activate Windows.</div>
      </div>
    </div>
  );
}

/* ---------- Taskbar ---------- */

const Office = ({ l, dark, mid, light, badge }) => (
  <S>
    <rect x="4" y="0" width="12" height="16" rx="1" fill={mid} />
    <path d="M10 0h5a1 1 0 0 1 1 1v4h-6z" fill={light} />
    <path d="M4 11h12v4a1 1 0 0 1-1 1H5a1 1 0 0 1-1-1z" fill={dark} />
    <rect x="0" y="3" width="10" height="10" rx="1" fill={badge} />
    <text x="5" y="10.800" fontSize="8" fontWeight="700" textAnchor="middle" fill="#fff" fontFamily="Open Sans">{l}</text>
  </S>
);

const apps = [
  { icon: <S><path d="M5 3V1h6v2" fill="none" stroke="#28b5ea" strokeWidth="1.200" /><path d="M0 3h16v10.500a2 2 0 0 1-2 2H2a2 2 0 0 1-2-2z" fill="#f2f4f5" /><path d="M4.200 5.500h3.400v3.200H4.200z" fill="#f25022" /><path d="M8.400 5.500h3.400v3.200H8.400z" fill="#7fba00" /><path d="M4.200 9.500h3.400v3.200H4.200z" fill="#00a4ef" /><path d="M8.400 9.500h3.400v3.200H8.400z" fill="#ffb900" /></S> },
  { icon: <S><circle cx="8.500" cy="8" r="7.500" fill="#d35230" /><path d="M8.500.5A7.500 7.500 0 0 1 16 8H8.500z" fill="#ff8f6b" /><path d="M1.500 10.500a7.500 7.500 0 0 0 14 0z" fill="#c13b1b" /><rect x="0" y="3" width="10" height="10" rx="1" fill="#c43e1c" /><text x="5" y="10.800" fontSize="8" fontWeight="700" textAnchor="middle" fill="#fff" fontFamily="Open Sans">P</text></S> },
  { line: true, icon: <S><path d="M0 1.500h6L7.500 3.500H16V6H0z" fill="#e2a010" /><rect y="4" width="16" height="11" rx=".6" fill="#ffd45c" /><path d="M3 15V9.500h10V15h-2.500v-3h-5v3z" fill="#3f8fdc" /></S> },
  { icon: <Office l="X" dark="#185c37" mid="#21a366" light="#33c481" badge="#107c41" /> },
  { icon: <S><circle cx="8" cy="8.500" r="7.500" fill="#ff6a2b" /><path d="M9.500 0c1 2.500 6 4 6 8.500A7.500 7.500 0 0 1 8 16C3 16 1 12.500.7 10c3 3 7 3.500 9.500 1 2-2.500 1-7-.7-11z" fill="#ffc02e" /><path d="M.6 7.500C.8 4.500 2 3 3 2c.2 1.200.6 1.800 1.300 2.200L3 9.500l2 4-2 .8C1.500 13 .4 10.500.6 7.500z" fill="#ff3a5c" /><path d="M3 13c2 3 8 3.500 10.500.5-3 1.500-6 .5-7.500-1.500z" fill="#f5347f" /><circle cx="8" cy="8.800" r="3" fill="#7a44d6" /><path d="M5 6.500c2-.8 3.800 0 4 1.500-1.500-.5-2.300.5-3.300.5z" fill="#ff8a1e" /></S> },
  { icon: <S><circle cx="8" cy="8" r="8" fill="#1783c9" /><path d="M.2 6.500C1 2.500 4.500 0 8 0c4.500 0 8 3.500 8 7 0 2.500-2 4-4 4-1.700 0-2.600-.7-2.300-1.300.6-.7.700-1.300.3-2.300C9 5.500 4 4 .2 6.500z" fill="#3ec9b4" /><path d="M11 .6c3 1.200 5 4 5 6.500 0 2.300-2 3.900-4 3.900-1.700 0-2.600-.7-2.300-1.300C12 8 13.500 4 11 .6z" fill="#6ddb5e" /><path d="M6 8.500c-1 4 3 6.500 8 4C12.500 15 10 16 8 16c-3.500-1-5-5-2-7.500z" fill="#0c4f94" /><path d="M7 7.500c1.500-1.200 3-.3 3 .7 0 .7-.7 1-.5 1.700.5 1.300 3 2 5.200.6-2 3.500-8.700 2-7.700-3z" fill="#22333c" /></S> },
  { icon: <S><rect x="4" y="0" width="9" height="13" rx="1" fill="#21a366" /><path d="M9 0h3a1 1 0 0 1 1 1v5H9z" fill="#33c481" /><path d="M4 9h11a1 1 0 0 1 1 1v5a1 1 0 0 1-1 1H5a1 1 0 0 1-1-1z" fill="#185c37" /><rect y="3" width="10" height="10" rx="1" fill="#107c41" /><text x="5" y="10.800" fontSize="8" fontWeight="700" textAnchor="middle" fill="#fff" fontFamily="Open Sans">P</text></S> },
  { icon: <Office l="W" dark="#103f91" mid="#2b7cd3" light="#41a5ee" badge="#185abd" /> },
  { active: true, line: true, icon: <S className="h-[15px] w-[15px]"><circle cx="8" cy="8" r="8" fill="#34a853" /><path d="M8 8 1.100 4A8 8 0 0 1 15 4z" fill="#ea4335" /><path d="M8 8 15 4a8 8 0 0 1-7 12z" fill="#fbbc04" /><path d="M15 4H8l-1 3z" fill="#ea4335" /><circle cx="8" cy="8" r="3.800" fill="#fff" /><circle cx="8" cy="8" r="3" fill="#4285f4" /></S> },
  { line: true, icon: <S><path d="M11.500 0 16 2v12l-4.500 2z" fill="#2aa3ef" /><path d="M11.500 0v4.600L2.500 12 .6 10.600z" fill="#1b86cf" /><path d="M11.500 16v-4.600L2.500 4 .6 5.400z" fill="#0f71b5" /></S> },
];

function Taskbar() {
  return (
    <footer className={`flex h-[30px] items-center bg-gradient-to-r from-[#24353f] via-[#2b3a3c] to-[#1c2c38] text-[12px] text-white ${CHROME_FONT}`}>
      <div className="flex w-9 justify-center">
        <svg viewBox="0 0 16 16" className="h-4 w-4"><path d="M0 2.300 6.500 1.400v6.200H0zM7.300 1.200 16 0v7.600H7.300zM0 8.400h6.500v6.200L0 13.700zM7.300 8.400H16V16l-8.700-1.200z" fill="#fff" /></svg>
      </div>
      <div className="flex w-9 justify-center">
        <svg viewBox="0 0 16 16" className="h-4 w-4"><circle cx="10.500" cy="5.500" r="5" fill="none" stroke="#fff" strokeWidth="1.100" /><path d="M7 9 .5 15.500" stroke="#fff" strokeWidth="1.200" /></svg>
      </div>
      <div className="flex w-[37px] justify-center">
        <svg viewBox="0 0 16 16" className="h-4 w-4"><path d="M.5 0v2.500h11V0M1.500 5.500h9v5h-9zM.5 16v-2.500h11V16M14.500 0v3M14.500 8v8" fill="none" stroke="#fff" /><path d="M13.500 4.500h2.500v2.500h-2.500z" fill="#fff" /></svg>
      </div>
      {apps.map((a, i) => (
        <div key={i} className={`relative flex h-[30px] w-[37px] shrink-0 items-center justify-center ${a.active ? "border-r border-[#35444b] bg-[#566269]" : ""}`}>
          {a.icon}
          {a.line && <i className={`absolute bottom-0 h-0.5 bg-[#6a9fec] ${a.active ? "inset-x-0" : "w-7"}`} />}
        </div>
      ))}
      <div className="ml-auto flex items-center">
        <svg viewBox="0 0 22 20" className="h-5 w-[22px]">
          <path d="M5 12.500A4.500 4.500 0 0 1 4.500 4 6 6 0 0 1 15.500 3a4.800 4.800 0 0 1 1 9.500z" fill="#b9def7" />
          <path d="M4.500 4A6 6 0 0 1 15.500 3c-2 .2-3.500 1.500-4 3C9 4 6 4 4.500 4z" fill="#e6f5ff" />
          <path d="M5 14.500l-1.200 2.700a1.300 1.300 0 1 0 2.400 0zM10.500 12.500l-1.200 2.700a1.300 1.300 0 1 0 2.400 0zM16 12l-1.200 2.700a1.300 1.300 0 1 0 2.400 0zM8 16l-.8 2a1 1 0 1 0 1.800 0z" fill="#3f9ae8" />
        </svg>
        <span className="ml-[9px] w-[38px] whitespace-nowrap text-[13.500px] tracking-[-0.2px]">26°C</span>
        <span className="w-[47px] whitespace-nowrap text-[13.500px] tracking-[-0.2px]">Hujan</span>
        <svg viewBox="0 0 12 8" className="h-2 w-3"><path d="M.5 7 6 1.500 11.500 7" fill="none" stroke="#fff" strokeWidth="1.200" /></svg>
        <svg viewBox="0 0 12 16" className="ml-3 h-4 w-3"><rect x=".6" y="4.500" width="7.500" height="7" rx="1" fill="none" stroke="#fff" /><path d="M8 7l3.300-1.800v5.600L8 9M1.500 2C4 .3 7 .3 9.500 2M1.500 14c2.500 1.700 5.500 1.700 8 0" fill="none" stroke="#fff" /></svg>
        <svg viewBox="0 0 17 14" className="ml-[10px] h-[14px] w-[17px]"><path d="M3.500 10A3.300 3.300 0 0 1 3 3.600 4.600 4.600 0 0 1 11.500 3a3.600 3.600 0 0 1 1 7z" fill="#a2a7aa" /><circle cx="12" cy="9.500" r="4.300" fill="#fff" /><circle cx="12" cy="9.500" r="3.700" fill="#1e73c9" /><path d="M10 9a2 2 0 0 1 3.700-.6M14 10a2 2 0 0 1-3.700.6" fill="none" stroke="#fff" /></svg>
        <svg viewBox="0 0 12 16" className="ml-[9px] h-4 w-3"><rect x="3" y="0" width="6" height="11" rx="1" fill="#fff" /><path d="M1 7.500V11c0 1.500.5 2 2 2h6c1.500 0 2-.5 2-2V7.500M6 13v2.500M3.500 15.500h5" fill="none" stroke="#fff" /></svg>
        <svg viewBox="0 0 16 12" className="ml-[11px] h-3 w-4"><path d="M6.500 3.500h8v7H5.500V7M14.500 5.500h1.200v3h-1.200" fill="none" stroke="#fff" /><path d="M.5 3h5v2.500L4 7H2L.5 5.500zM1.500.5V3M4.500.5V3M3 7v3.500h2.500" fill="none" stroke="#fff" /></svg>
        <svg viewBox="0 0 14 14" className="ml-[10px] h-[14px] w-[14px]"><path d="M1 13C1 6.500 6 1.500 13 1.500M4 13c0-5 4-8.500 9-8.500M7 13c0-3 2.500-5.500 6-5.500" fill="none" stroke="#fff" /><path d="M10 13a3 3 0 0 1 3-3v3z" fill="#fff" /></svg>
        <svg viewBox="0 0 17 14" className="ml-[8px] h-[14px] w-[17px]"><path d="M.5 5h2.700L6.500 1.700v10.600L3.200 9H.5z" fill="none" stroke="#fff" /><path d="M8.500 5c1 1.200 1 2.800 0 4M10.800 3.200c2 2.200 2 5.400 0 7.600M13.200 1.500c2.800 3.200 2.800 7.800 0 11" fill="none" stroke="#fff" /></svg>
        <span className="ml-[8px] w-[36px] tracking-[-0.5px]">ENG</span>
        <span className="w-[67px] whitespace-nowrap tracking-[-0.5px]">12:27 PM</span>
        <svg viewBox="0 0 16 16" className="h-4 w-4"><path d="M0 0h16v12.500h-5L8 15.800 5 12.500H0z" fill="#fff" /><path d="M3 3.500h10M3 6.300h10M3 9h6" stroke="#22323c" strokeWidth="1.100" /></svg>
        <i className="ml-5 mr-1 h-[30px] w-px bg-[#66727a]" />
      </div>
    </footer>
  );
}

export default function App() {
  return (
    <div className="flex h-[768px] w-[1366px] flex-col overflow-hidden">
      <header className={`relative h-[102px] shrink-0 ${CHROME_FONT}`}>
        <LeafTheme />
        <TabStrip />
        <Toolbar />
        <Bookmarks />
      </header>
      <Page />
      <Taskbar />
    </div>
  );
}
